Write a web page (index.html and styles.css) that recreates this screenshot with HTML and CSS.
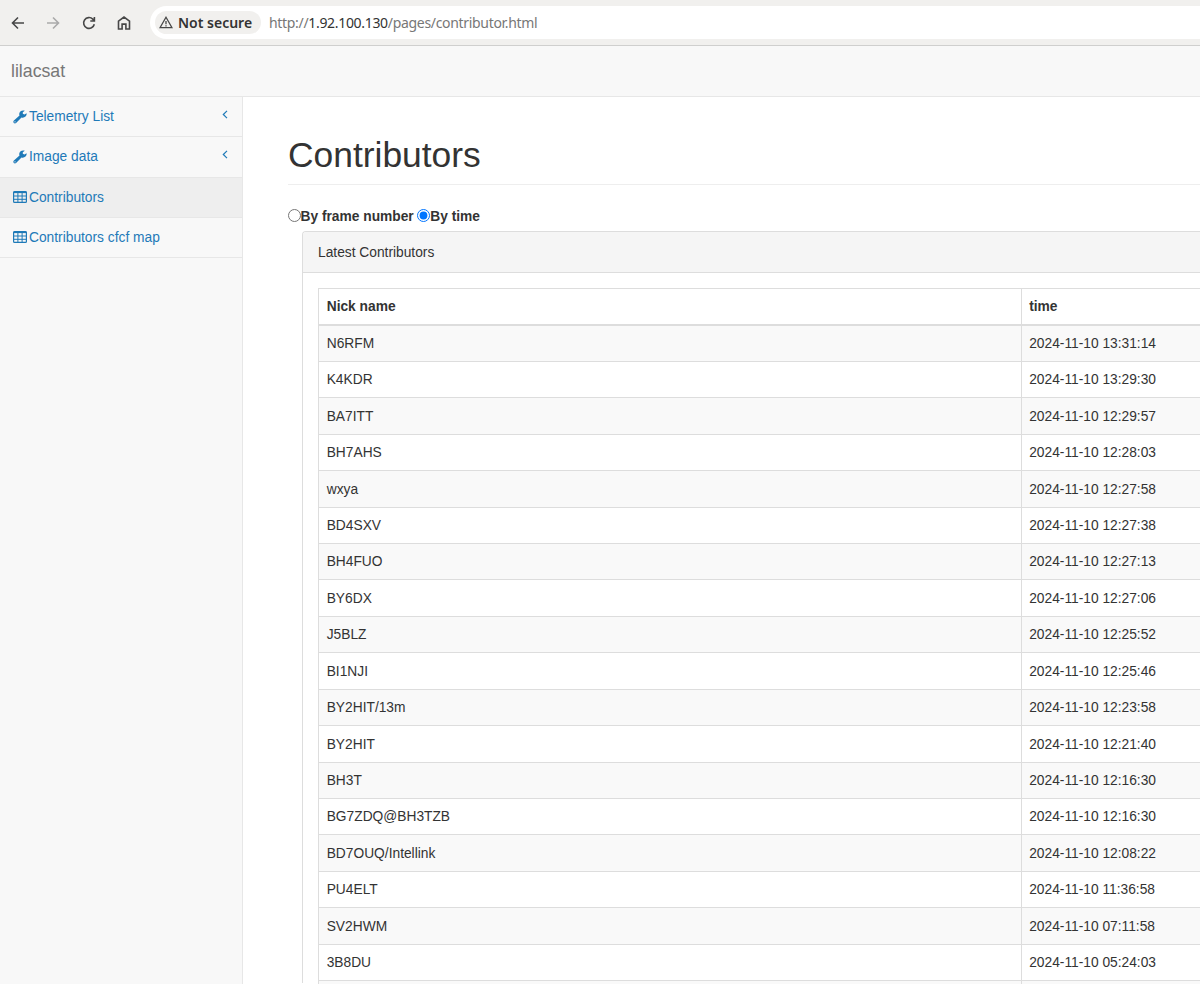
FILE: index.html
```html
<!DOCTYPE html>
<html lang="en">
<head>
  <meta charset="UTF-8">
  <meta name="viewport" content="width=device-width, initial-scale=1.0">
  <title>Contributors</title>
  <link rel="stylesheet" href="styles.css">
</head>
<body>
  <svg class="symbols">
    <symbol id="wrench" viewBox="0 0 14 14">
      <path fill="currentColor" fill-rule="evenodd" d="M13.6 3.2 11.4 4.6 9.8 3.7 9.8 2.2 11.8.8C10.4.2 8.5.4 7.3 1.6 6.2 2.7 6 4.2 6.5 5.500L.9 10.600C.2 11.300.2 12.200.8 12.900 1.500 13.600 2.500 13.500 3.100 12.900L8.500 7.500C9.900 8 11.400 7.600 12.500 6.600 13.400 5.600 13.800 4.300 13.600 3.200ZM2 11.200A.6.6 0 1 1 2 12.400.6.6 0 0 1 2 11.200Z"/>
    </symbol>
    <symbol id="table" viewBox="0 0 14 12">
      <rect x=".6" y=".6" width="12.800" height="10.800" rx=".9" fill="none" stroke="currentColor" stroke-width="1.200"/>
      <path d="M.6 1.300H13.400" stroke="currentColor" stroke-width="1.600"/>
      <path d="M.6 5H13.400M.6 8.300H13.400M4.900 1V11.400M9.100 1V11.400" stroke="currentColor" stroke-width="1"/>
    </symbol>
  </svg>

  <div class="browser-bar">
    <div class="browser-buttons">
      <svg width="14" height="14" viewBox="0 0 14 14"><path d="M13 7H2M7 1.500 1.500 7 7 12.500"/></svg>
      <svg class="disabled" width="14" height="14" viewBox="0 0 14 14"><path d="M1 7H12M7 1.500 12.500 7 7 12.500"/></svg>
      <svg width="14" height="14" viewBox="0 0 14 14"><path d="M12.300 8.200A5.400 5.400 0 1 1 10.800 3.100L12.200 4.600M12.400.9V5H8.300"/></svg>
      <svg width="14" height="14" viewBox="0 0 14 14"><path d="M1.500 5.200 7 1.100 12.500 5.200V13H8.900V8.100H5.100V13H1.500Z"/></svg>
    </div>
    <div class="address">
      <span class="security">
        <svg width="14" height="13" viewBox="0 0 14 13"><path d="M7 1.300 13 11.700H1Z"/><path d="M7 4.900V8.200M7 9.200V10.500"/></svg>
        Not secure
      </span>
      <span class="url">http://<b>1.92.100.130</b>/pages/contributor.html</span>
    </div>
  </div>

  <nav class="navbar"><a href="#">lilacsat</a></nav>

  <div class="wrapper">
    <ul class="sidebar">
      <li><a href="#"><svg class="wrench"><use href="#wrench"/></svg>Telemetry List<svg class="arrow" viewBox="0 0 6 9"><path d="M5 .8 1.300 4.500 5 8.200"/></svg></a></li>
      <li><a href="#"><svg class="wrench"><use href="#wrench"/></svg>Image data<svg class="arrow" viewBox="0 0 6 9"><path d="M5 .8 1.300 4.500 5 8.200"/></svg></a></li>
      <li><a href="#" class="active"><svg class="table-icon"><use href="#table"/></svg>Contributors</a></li>
      <li><a href="#"><svg class="table-icon"><use href="#table"/></svg>Contributors cfcf map</a></li>
    </ul>

    <main class="page">
      <h1>Contributors</h1>
      <div class="sort">
        <label><input type="radio" name="sort">By frame number</label>
        <label><input type="radio" name="sort" checked>By time</label>
      </div>
      <div class="panel">
        <div class="panel-heading">Latest Contributors</div>
        <div class="panel-body">
          <table>
            <thead>
              <tr><th>Nick name</th><th>time</th></tr>
            </thead>
            <tbody>
              <tr><td>N6RFM</td><td>2024-11-10 13:31:14</td></tr>
              <tr><td>K4KDR</td><td>2024-11-10 13:29:30</td></tr>
              <tr><td>BA7ITT</td><td>2024-11-10 12:29:57</td></tr>
              <tr><td>BH7AHS</td><td>2024-11-10 12:28:03</td></tr>
              <tr><td>wxya</td><td>2024-11-10 12:27:58</td></tr>
              <tr><td>BD4SXV</td><td>2024-11-10 12:27:38</td></tr>
              <tr><td>BH4FUO</td><td>2024-11-10 12:27:13</td></tr>
              <tr><td>BY6DX</td><td>2024-11-10 12:27:06</td></tr>
              <tr><td>J5BLZ</td><td>2024-11-10 12:25:52</td></tr>
              <tr><td>BI1NJI</td><td>2024-11-10 12:25:46</td></tr>
              <tr><td>BY2HIT/13m</td><td>2024-11-10 12:23:58</td></tr>
              <tr><td>BY2HIT</td><td>2024-11-10 12:21:40</td></tr>
              <tr><td>BH3T</td><td>2024-11-10 12:16:30</td></tr>
              <tr><td>BG7ZDQ@BH3TZB</td><td>2024-11-10 12:16:30</td></tr>
              <tr><td>BD7OUQ/Intellink</td><td>2024-11-10 12:08:22</td></tr>
              <tr><td>PU4ELT</td><td>2024-11-10 11:36:58</td></tr>
              <tr><td>SV2HWM</td><td>2024-11-10 07:11:58</td></tr>
              <tr><td>3B8DU</td><td>2024-11-10 05:24:03</td></tr>
              <tr class="cut"><td></td><td></td></tr>
            </tbody>
          </table>
        </div>
      </div>
    </main>
  </div>
</body>
</html>
```
FILE: styles.css
```css
* {
  box-sizing: border-box;
}
body {
  margin: 0;
  height: 984px;
  overflow: hidden;
  background: #fff;
  color: #333;
  font-family: "Liberation Sans", Arial, sans-serif;
  font-size: 13.780px;
  line-height: 20px;
}
a {
  color: #1f7ab8;
  text-decoration: none;
}
.symbols {
  display: none;
}

/* browser toolbar */
.browser-bar {
  display: flex;
  align-items: center;
  height: 46px;
  padding-left: 11px;
  background: #f1f0ee;
  border-bottom: 1px solid #cfcfce;
  font-family: "Noto Sans", sans-serif;
  font-size: 14px;
}
.browser-buttons {
  display: flex;
  gap: 21.400px;
  width: 139px;
}
.browser-bar svg {
  flex: none;
  fill: none;
  stroke: #474747;
  stroke-width: 1.600;
}
.browser-bar .disabled {
  stroke: #aaa;
}
.address {
  display: flex;
  align-items: center;
  flex: 1;
  height: 33px;
  padding-left: 5px;
  background: #fff;
  border-radius: 17px 0 0 17px;
}
.security {
  display: flex;
  align-items: center;
  gap: 5px;
  width: 106px;
  height: 23px;
  padding-left: 4px;
  border-radius: 12px;
  background: #f1f0ee;
  color: #333;
  font-weight: 600;
  font-size: 14px;
  white-space: nowrap;
}
.browser-bar .security svg {
  stroke-width: 1.300;
}
.url {
  margin-left: 8px;
  color: #777;
  letter-spacing: -0.320px;
}
.url b {
  color: #333;
  font-weight: 400;
}

.navbar {
  height: 51px;
  padding: 15px 11px 0;
  background: #f8f8f8;
  border-bottom: 1px solid #e7e7e7;
  font-size: 17.700px;
}
.navbar a {
  color: #777;
}

.wrapper {
  display: flex;
  height: 887px;
}
.sidebar {
  flex: none;
  width: 243px;
  margin: 0;
  padding: 0;
  list-style: none;
  background: #f8f8f8;
  border-right: 1px solid #e7e7e7;
}
.sidebar li {
  height: 40.300px;
  border-bottom: 1px solid #e7e7e7;
}
.sidebar a {
  display: flex;
  align-items: center;
  height: 100%;
  padding: 1px 14px 0 13px;
}
.sidebar .active {
  background: #eee;
}
.wrench {
  width: 14px;
  height: 14px;
  margin: 0 2px 1px 0;
}
.table-icon {
  width: 14px;
  height: 12px;
  margin: 0 2px 2px 0;
}
.arrow {
  width: 6px;
  height: 9px;
  margin: 0 0 6px auto;
  fill: none;
  stroke: currentColor;
  stroke-width: 1.200;
}

.page {
  flex: 1;
  padding: 39px 0 0 45px;
}
h1 {
  margin: 0 0 21px;
  padding-bottom: 9px;
  border-bottom: 1px solid #eee;
  font-size: 35.400px;
  font-weight: 500;
  line-height: 39px;
}
.sort {
  display: flex;
  gap: 4px;
  height: 25px;
  padding-top: 1px;
  font-weight: bold;
}
.sort label {
  display: flex;
  align-items: flex-start;
}
.sort input {
  width: 13px;
  height: 13px;
  margin: 2px 0 0 -0.500px;
}
.panel {
  height: 752px;
  margin-left: 14px;
  border: 1px solid #ddd;
  border-width: 1px 0 0 1px;
  border-radius: 4px 0 0;
}
.panel-heading {
  height: 41px;
  padding: 11px 15px 0;
  background: #f5f5f5;
  border-bottom: 1px solid #ddd;
  border-radius: 3px 0 0;
}
.panel-body {
  padding: 14.500px 0 0 15px;
}
table {
  width: 100%;
  table-layout: fixed;
  border-spacing: 0;
  border-left: 1px solid #ddd;
  border-top: 1px solid #ddd;
}
th, td {
  height: 36.430px;
  padding: 1.500px 7.700px 0;
  border-bottom: 1px solid #ddd;
  text-align: left;
}
th {
  height: 37px;
  border-bottom-width: 2px;
}
th:first-child, td:first-child {
  width: 702.500px;
  border-right: 1px solid #ddd;
}
tbody tr:nth-child(odd) {
  background: #f9f9f9;
}
.cut td {
  height: 3px;
  border-bottom: 0;
}
```
